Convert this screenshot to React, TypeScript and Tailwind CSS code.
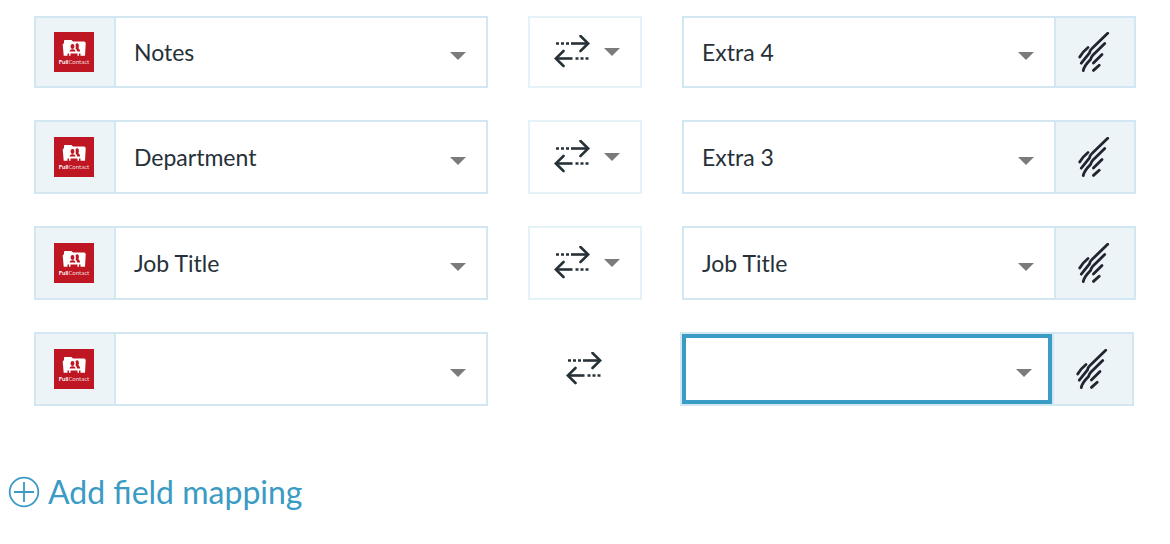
import React from "react";
import clsx from "clsx";

type Mapping = {
  id: string;
  source: string;
  target: string;
  /** Rows that are still being filled in have no direction menu. */
  draft?: boolean;
};

const FIELDS = ["", "Notes", "Department", "Job Title"];
const TARGETS = ["", "Extra 3", "Extra 4", "Job Title"];

const MAPPINGS: Mapping[] = [
  { id: "notes", source: "Notes", target: "Extra 4" },
  { id: "department", source: "Department", target: "Extra 3" },
  { id: "job-title", source: "Job Title", target: "Job Title" },
  { id: "new", source: "", target: "", draft: true },
];

function Caret({ className }: { className?: string }) {
  return (
    <svg
      aria-hidden="true"
      viewBox="0 0 16 8"
      className={clsx("h-2 w-4 shrink-0 fill-[#7b7b7b]", className)}
    >
      <path d="M0 0h16L8 8z" />
    </svg>
  );
}

function FullContactLogo() {
  return (
    <svg
      role="img"
      aria-label="FullContact"
      viewBox="0 0 40 40"
      className="size-10"
    >
      <path fill="#be1622" d="M0 0h40v40H0z" />
      <path
        fill="#fff"
        d="M11 8h6.500l1.500 1.500h11q1.800 0 1.700 2l-.7 12.200h-4.500v-2.200H25v2.200h-1.500v-2.200h-7v2.200H15v-2.200h-1.500v2.200H9.700L8.700 12.500 10 11V9q0-1 1-1z"
      />
      <g fill="#be1622">
        <ellipse cx="18.500" cy="14.500" rx="1.900" ry="2.400" />
        <path d="M15.500 19.500q.2-1.800 2.300-2.300h1.600q2 .5 2.200 2.300z" />
        <path d="M21.500 12.200q2-1.800 3.200.2.500 2.300-.4 3.600 1.700 1 1.900 3.500h-3q-.3-2-1.600-3 .7-2-.1-4.300z" />
      </g>
      <text
        x="20"
        y="32"
        textAnchor="middle"
        fill="#fff"
        fontSize="6"
        className="font-['Lato',sans-serif]"
      >
        <tspan fontWeight="700">Full</tspan>
        <tspan fillOpacity="0.85">Contact</tspan>
      </text>
    </svg>
  );
}

function ScribbleLogo() {
  return (
    <svg
      role="img"
      aria-label="Target app"
      viewBox="0 0 32 40"
      className="h-10 w-8"
      fill="none"
      stroke="#22242f"
      strokeWidth="2.800"
      strokeLinecap="round"
    >
      <path d="M29.700 1.300 14 16.500Q12 18 11.500 21L3.300 31.200" />
      <path d="M26.700 11.500 15 23Q13.500 24.500 12.500 27.500 6 34 5.300 38.500" />
      <path d="M10 15.500Q5 19.500 1.700 25" />
      <path d="M24 22.500 15.400 31" />
      <path d="M21.200 33.200 15.500 38.400" />
    </svg>
  );
}

function SyncArrows() {
  return (
    <svg
      aria-hidden="true"
      viewBox="0 0 36 34"
      className="h-[34px] w-9 shrink-0"
      fill="none"
      stroke="#263238"
      strokeWidth="2.600"
    >
      <path d="M2 8.500h14" strokeDasharray="3 2" />
      <path d="M17 8.500h17" />
      <path d="M26.500 1l7.700 7.500-7.700 7.500" strokeLinecap="round" />
      <path d="M34.500 23.500H20" strokeDasharray="3 2" />
      <path d="M18.500 23.500H2" />
      <path d="M9.500 16l-7.700 7.500L9.500 31" strokeLinecap="round" />
    </svg>
  );
}

type FieldSelectProps = {
  label: string;
  value: string;
  options: string[];
  active?: boolean;
};

function FieldSelect({ label, value, options, active }: FieldSelectProps) {
  return (
    <div className="relative flex min-w-0 flex-1">
      <select
        aria-label={label}
        defaultValue={value}
        className={clsx(
          "w-full appearance-none bg-white pr-12 text-[23px] text-[#263038] outline-none",
          active ? "border-4 border-[#3a9bc4] pl-3.5" : "pl-[18px]",
        )}
      >
        {options.map((option) => (
          <option key={option} value={option}>
            {option}
          </option>
        ))}
      </select>
      <Caret className="pointer-events-none absolute top-1/2 right-5" />
    </div>
  );
}

const groupClass = "flex min-w-0 flex-1 border-2 border-[#d2e7f1]";
const logoCellClass =
  "flex w-20 shrink-0 items-center justify-center border-[#d2e7f1] bg-[#ecf4f8] pr-0.5";

function MappingRow({ mapping }: { mapping: Mapping }) {
  const { source, target, draft } = mapping;

  return (
    <li
      className={clsx(
        "flex h-[74px] gap-10 first:h-[72px]",
        draft && "pr-0.5",
      )}
    >
      <div className={groupClass}>
        <div className={clsx(logoCellClass, "border-r-2")}>
          <FullContactLogo />
        </div>
        <FieldSelect label="Source field" value={source} options={FIELDS} />
      </div>

      {draft ? (
        <div className="flex w-28 shrink-0 items-center justify-center">
          <SyncArrows />
        </div>
      ) : (
        <button
          type="button"
          aria-label="Sync direction"
          className="flex w-[114px] shrink-0 items-center justify-center gap-3.5 border-2 border-[#e4f1f7] pl-1"
        >
          <SyncArrows />
          <Caret />
        </button>
      )}

      <div className={groupClass}>
        <FieldSelect
          label="Target field"
          value={target}
          options={TARGETS}
          active={draft}
        />
        <div className={clsx(logoCellClass, "border-l-2")}>
          <ScribbleLogo />
        </div>
      </div>
    </li>
  );
}

export default function App() {
  return (
    <main className="min-h-screen bg-white font-['Lato',sans-serif]">
      <ul className="flex flex-col gap-8 px-[34px] pt-4">
        {MAPPINGS.map((mapping) => (
          <MappingRow key={mapping.id} mapping={mapping} />
        ))}
      </ul>

      <button
        type="button"
        className="mt-16 ml-2 flex items-center gap-2 text-[32px] leading-[44px] text-[#3a9bc4]"
      >
        <svg
          aria-hidden="true"
          viewBox="0 0 32 32"
          className="size-8"
          fill="none"
          stroke="currentColor"
          strokeWidth="1.800"
        >
          <circle cx="16" cy="16" r="14.300" />
          <path d="M16 6v20M6 16h20" />
        </svg>
        Add field mapping
      </button>
    </main>
  );
}
